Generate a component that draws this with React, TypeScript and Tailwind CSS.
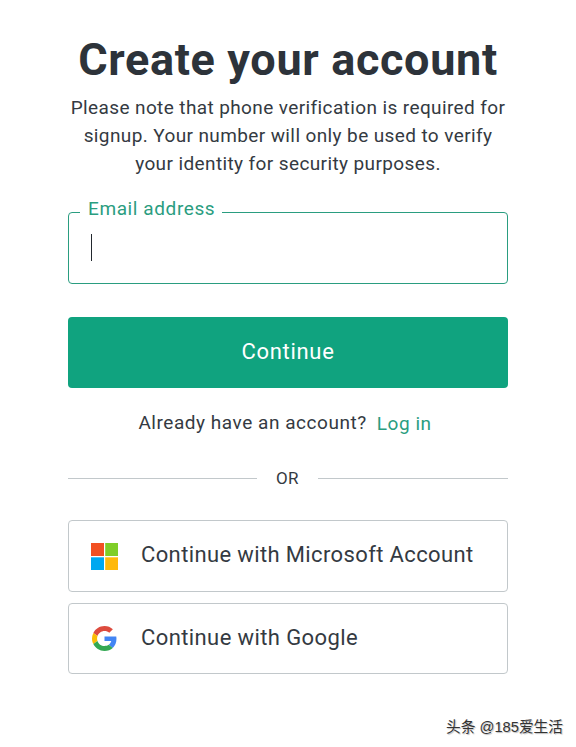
import type { ReactNode } from "react";

function MicrosoftLogo() {
  return (
    <svg width="27" height="27" viewBox="0 0 27 27" aria-hidden="true">
      <path fill="#f25022" d="M0 0h13v13H0z" />
      <path fill="#7fce28" d="M14.2 0H27v13H14.2z" />
      <path fill="#00a8f0" d="M0 14.3h13V27H0z" />
      <path fill="#ffb90a" d="M14.2 14.3H27V27H14.2z" />
    </svg>
  );
}

function GoogleLogo() {
  return (
    <svg width="25" height="25" viewBox="0 0 48 48" aria-hidden="true">
      <path fill="#dd4b3e" d="M24 9.5c3.54 0 6.71 1.22 9.21 3.6l6.85-6.85C35.9 2.38 30.47 0 24 0 14.62 0 6.51 5.38 2.56 13.22l7.98 6.19C12.43 13.72 17.74 9.5 24 9.5z" />
      <path fill="#4285f4" d="M46.98 24.55c0-1.57-.15-3.09-.38-4.55H24v9.02h12.94c-.58 2.96-2.26 5.48-4.78 7.18l7.73 6c4.51-4.18 7.09-10.36 7.09-17.65z" />
      <path fill="#fbbc05" d="M10.53 28.59c-.48-1.45-.76-2.99-.76-4.59s.27-3.14.76-4.59l-7.98-6.19C.92 16.46 0 20.12 0 24c0 3.88.92 7.54 2.56 10.78l7.97-6.19z" />
      <path fill="#34a853" d="M24 48c6.48 0 11.93-2.13 15.89-5.81l-7.73-6c-2.15 1.45-4.92 2.3-8.16 2.3-6.26 0-11.57-4.22-13.47-9.91l-7.98 6.19C6.51 42.62 14.62 48 24 48z" />
    </svg>
  );
}

function ProviderButton({ icon, children, className }: { icon: ReactNode; children: ReactNode; className: string }) {
  return (
    <button className={`flex w-full items-center rounded-[4px] border border-[#c2c8cb] bg-white text-left text-[22px] text-[#343a42] ${className}`}>
      <span className="ml-[21px] flex w-[28px] justify-center">{icon}</span>
      <span className="ml-[23px] whitespace-nowrap pb-[3px]">{children}</span>
    </button>
  );
}

export default function App() {
  return (
    <div className="flex h-[747px] w-[576px] flex-col bg-white font-['Roboto','Noto_Sans_CJK_SC',sans-serif] text-[#343a42]">
      <main className="ml-[68px] flex w-[440px] flex-col pt-[34px]">
        <h1 className="-mx-5 whitespace-nowrap text-center text-[45px] leading-[52px] font-bold tracking-[0.65px] text-[#2d333a]">Create your account</h1>
        <p className="-mx-5 mt-[8px] whitespace-nowrap text-center text-[19px] leading-[28px] tracking-[0.39px]">
          Please note that phone verification is required for<br />
          signup. Your number will only be used to verify<br />
          your identity for security purposes.
        </p>
        <fieldset className="mt-[21px] h-[85px] rounded-[4px] border border-[#2a9d80] pl-[11px]">
          <legend className="h-[27px] w-[142px] whitespace-nowrap pl-[8px] text-[19px] leading-[20px] tracking-[0.6px] text-[#2a9d80]">Email address</legend>
          <div className="mt-[8px] ml-[11px] h-[27px] w-px bg-[#22282e]" />
        </fieldset>
        <button className="mt-[33px] h-[71px] rounded-[4px] bg-[#10a37f] pb-[3px] text-[22px] tracking-[0.7px] text-white">Continue</button>
        <div className="mt-[21px] flex justify-center gap-[10px] whitespace-nowrap pr-[6px] text-[19px] leading-[28px] tracking-[0.54px]">
          <span>Already have an account?</span>
          <a className="pt-px text-[#2a9d80]">Log in</a>
        </div>
        <div className="mt-[26px] flex h-[28px] items-center text-[17px] tracking-[0.4px]">
          <span className="h-px w-[189px] bg-[#c2c8cb]" />
          <span className="flex-1 pt-[2px] text-center">OR</span>
          <span className="h-px w-[190px] bg-[#c2c8cb]" />
        </div>
        <div className="mt-[28px] flex flex-col gap-[11px]">
          <ProviderButton icon={<MicrosoftLogo />} className="h-[72px] tracking-[0.37px]">Continue with Microsoft Account</ProviderButton>
          <ProviderButton icon={<GoogleLogo />} className="h-[71px] tracking-[0.4px]">Continue with Google</ProviderButton>
        </div>
      </main>
      <footer className="mt-auto mr-[13px] mb-[9px] self-end whitespace-nowrap font-['Liberation_Sans','Noto_Sans_CJK_SC',sans-serif] text-[14.7px] leading-[22px] text-[#333] [text-shadow:1px_1px_1px_#bbb]">头条 @185爱生活</footer>
    </div>
  );
}
